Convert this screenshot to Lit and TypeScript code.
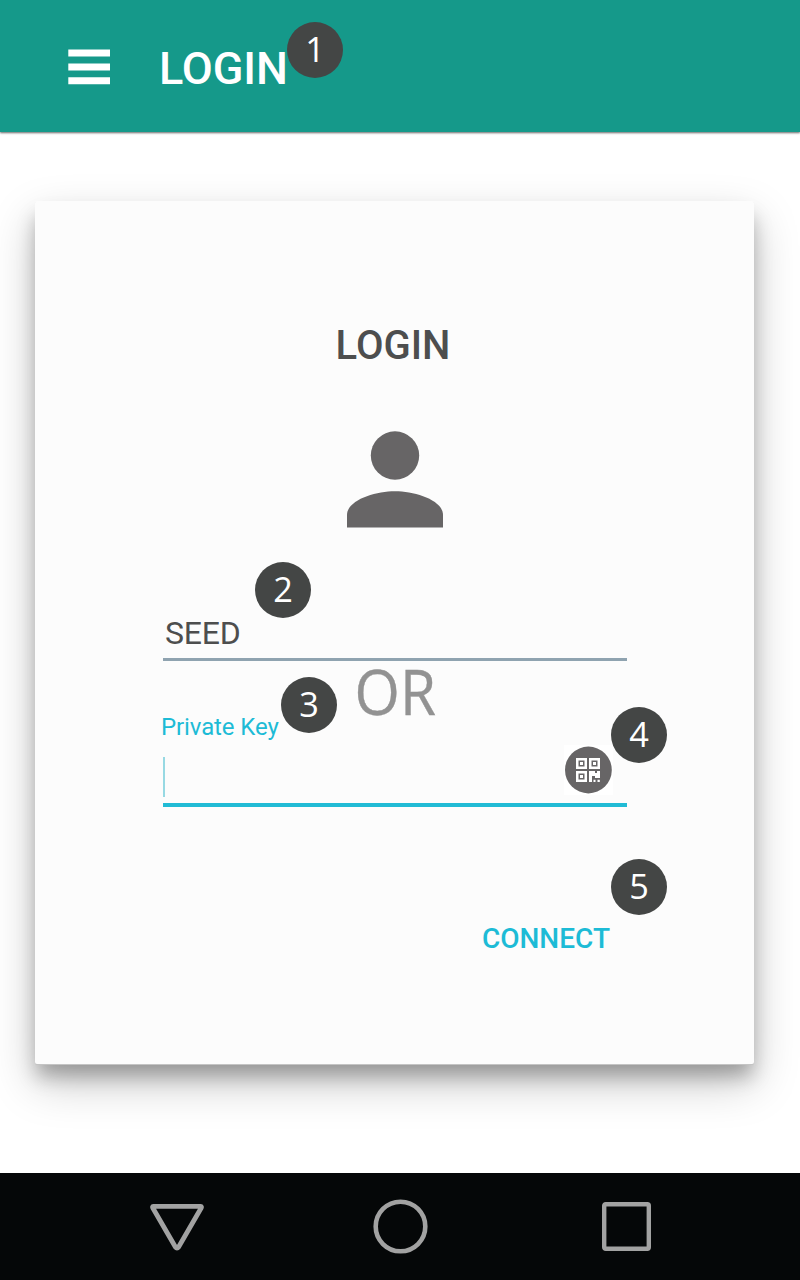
import { LitElement, html, css, svg } from "lit";
import { customElement, property } from "lit/decorators.js";

@customElement("step-badge")
class StepBadge extends LitElement {
  @property() label = "";
  static styles = css`
    :host {
      position: absolute;
      display: flex;
      align-items: center;
      justify-content: center;
      width: 56px;
      height: 56px;
      border-radius: 50%;
      background: #444645;
      color: #fff;
      font: 400 35px/54px "Open Sans", "Noto Sans", sans-serif;
    }
    .num {
      height: 56px;
      transform: scaleX(0.98);
    }
  `;
  render() {
    return html`<span class="num">${this.label}</span>`;
  }
}

@customElement("app-root")
class AppRoot extends LitElement {
  static styles = css`
    :host {
      display: flex;
      flex-direction: column;
      position: relative;
      width: 800px;
      height: 1280px;
      overflow: hidden;
      background: #fff;
      font-family: Roboto, sans-serif;
    }
    * {
      box-sizing: border-box;
    }
    svg {
      display: block;
      flex: none;
    }
    .bar {
      display: flex;
      align-items: center;
      gap: 48px;
      height: 132px;
      padding: 2px 0 0 68px;
      background: #15998a;
      box-shadow: 0 1px 2px rgba(0, 0, 0, 0.6);
      flex: none;
    }
    .bar-title {
      color: #fff;
      font-size: 45px;
      font-weight: 500;
      line-height: 54px;
      letter-spacing: -0.1px;
      margin: 4px 0 0;
    }
    main {
      flex: 1;
      padding: 69px 46px 0 35px;
    }
    .card {
      height: 863px;
      padding: 121px 127px 0 128px;
      display: flex;
      flex-direction: column;
      background: #fcfcfc;
      border-radius: 2px;
      box-shadow: 0 1px 0 #c4c4c4, 0 14px 18px -2px rgba(0, 0, 0, 0.28),
        0 19px 46px rgba(0, 0, 0, 0.22);
    }
    h2 {
      margin: 0 4px 0 0;
      text-align: center;
      font-size: 40px;
      line-height: 48px;
      font-weight: 500;
      color: #4d4e4e;
    }
    .person {
      margin: 61px auto 0;
    }
    .seed {
      height: 56px;
      margin-top: 77px;
      padding: 7px 0 0 2px;
      border-bottom: 3px solid #8fa3b0;
      font-size: 32px;
      line-height: 42px;
      letter-spacing: -0.2px;
      color: #4d4e4e;
    }
    .mid {
      display: grid;
      grid-template-columns: 1fr auto 1fr;
      height: 80px;
    }
    .key-label {
      align-self: end;
      margin: 0 0 -1px -2px;
      font-size: 24px;
      line-height: 30px;
      letter-spacing: -0.1px;
      color: #1dbbd6;
      white-space: nowrap;
    }
    .or {
      margin-top: -2px;
      font: 400 62px/64px "Open Sans", "Noto Sans", sans-serif;
      color: #929292;
      transform: scaleX(0.94);
      -webkit-text-stroke: 0.4px #929292;
    }
    .key {
      display: flex;
      justify-content: space-between;
      height: 66px;
      padding: 4px 14px 0 0;
      border-bottom: 4px solid #21bbd5;
    }
    .caret {
      width: 2px;
      height: 40px;
      margin-top: 12px;
      background: #97d9e3;
    }
    .connect {
      align-self: flex-end;
      margin: 115px 17px 0 0;
      font-size: 28px;
      line-height: 34px;
      font-weight: 500;
      color: #1dbbd6;
    }
    .nav {
      display: flex;
      align-items: center;
      justify-content: space-between;
      height: 107px;
      padding: 0 148px 0 149px;
      background: #050708;
      flex: none;
    }
    .b1 { left: 287px; top: 22px; }
    .b2 { left: 255px; top: 562px; }
    .b3 { left: 281px; top: 677px; }
    .b4 { left: 611px; top: 707px; }
    .b5 { left: 611px; top: 858.5px; }
  `;

  finder(x: number, y: number) {
    return svg`<rect x=${x + 1.25} y=${y + 1.25} width="8.5" height="8.5" fill="none" stroke="#fff" stroke-width="2.5"/>
      <rect x=${x + 4} y=${y + 4} width="3" height="3" fill="#fff"/>`;
  }

  render() {
    return html`
      <header class="bar">
        <svg width="43" height="36" viewBox="0 0 43 36" fill="#fff">
          <path d="M.3.4H42v7.2H.3zM.3 14.4H42v7.2H.3zM.3 28.2H42v7H.3z" />
        </svg>
        <span class="bar-title">LOGIN</span>
      </header>
      <main>
        <section class="card">
          <h2>LOGIN</h2>
          <svg class="person" width="96" height="97" viewBox="0 0 96 97" fill="#676566">
            <circle cx="48" cy="24.5" r="24.2" />
            <path d="M0 96.5V84C0 69 28 60.2 48 60.2S96 69 96 84V96.5Z" />
          </svg>
          <div class="seed">SEED</div>
          <div class="mid">
            <span class="key-label">Private Key</span>
            <span class="or">OR</span>
          </div>
          <div class="key">
            <span class="caret"></span>
            <svg width="49" height="50" viewBox="0 0 49 50">
              <rect width="49" height="50" fill="#fff" />
              <circle cx="24.4" cy="25" r="23.4" fill="#676566" />
              ${this.finder(12, 13)}${this.finder(25, 13)}${this.finder(12, 26)}
              <path
                fill="#fff"
                d="M25 26h6v2h2v-2h3v7h-5v-2h-3v6h-3zM29.5 34.8h2v2.2h-2zM33.5 34.8h2.3v2.2h-2.3z"
              />
            </svg>
          </div>
          <span class="connect">CONNECT</span>
        </section>
      </main>
      <nav class="nav">
        <svg width="56" height="56" viewBox="0 0 56 56" fill="none" stroke="#a2a2a2" stroke-width="4.8">
          <path stroke-linejoin="round" d="M4.2 7.4H51.8Q52.8 7.4 52.3 8.8L29.6 48Q28 50.2 26.4 48L3.7 8.8Q3.2 7.4 4.2 7.4Z" />
        </svg>
        <svg width="56" height="56" viewBox="2.5 0.5 56 56" fill="none" stroke="#a2a2a2" stroke-width="4.6" overflow="visible">
          <circle cx="28" cy="28" r="24.8" />
        </svg>
        <svg width="52" height="56" viewBox="0 0 52 56" fill="none" stroke="#a2a2a2" stroke-width="4.4">
          <rect x="4.2" y="5.2" width="44.6" height="44.6" rx="1.5" />
        </svg>
      </nav>
      ${[1, 2, 3, 4, 5].map((n) => html`<step-badge class="b${n}" label=${n}></step-badge>`)}
    `;
  }
}
